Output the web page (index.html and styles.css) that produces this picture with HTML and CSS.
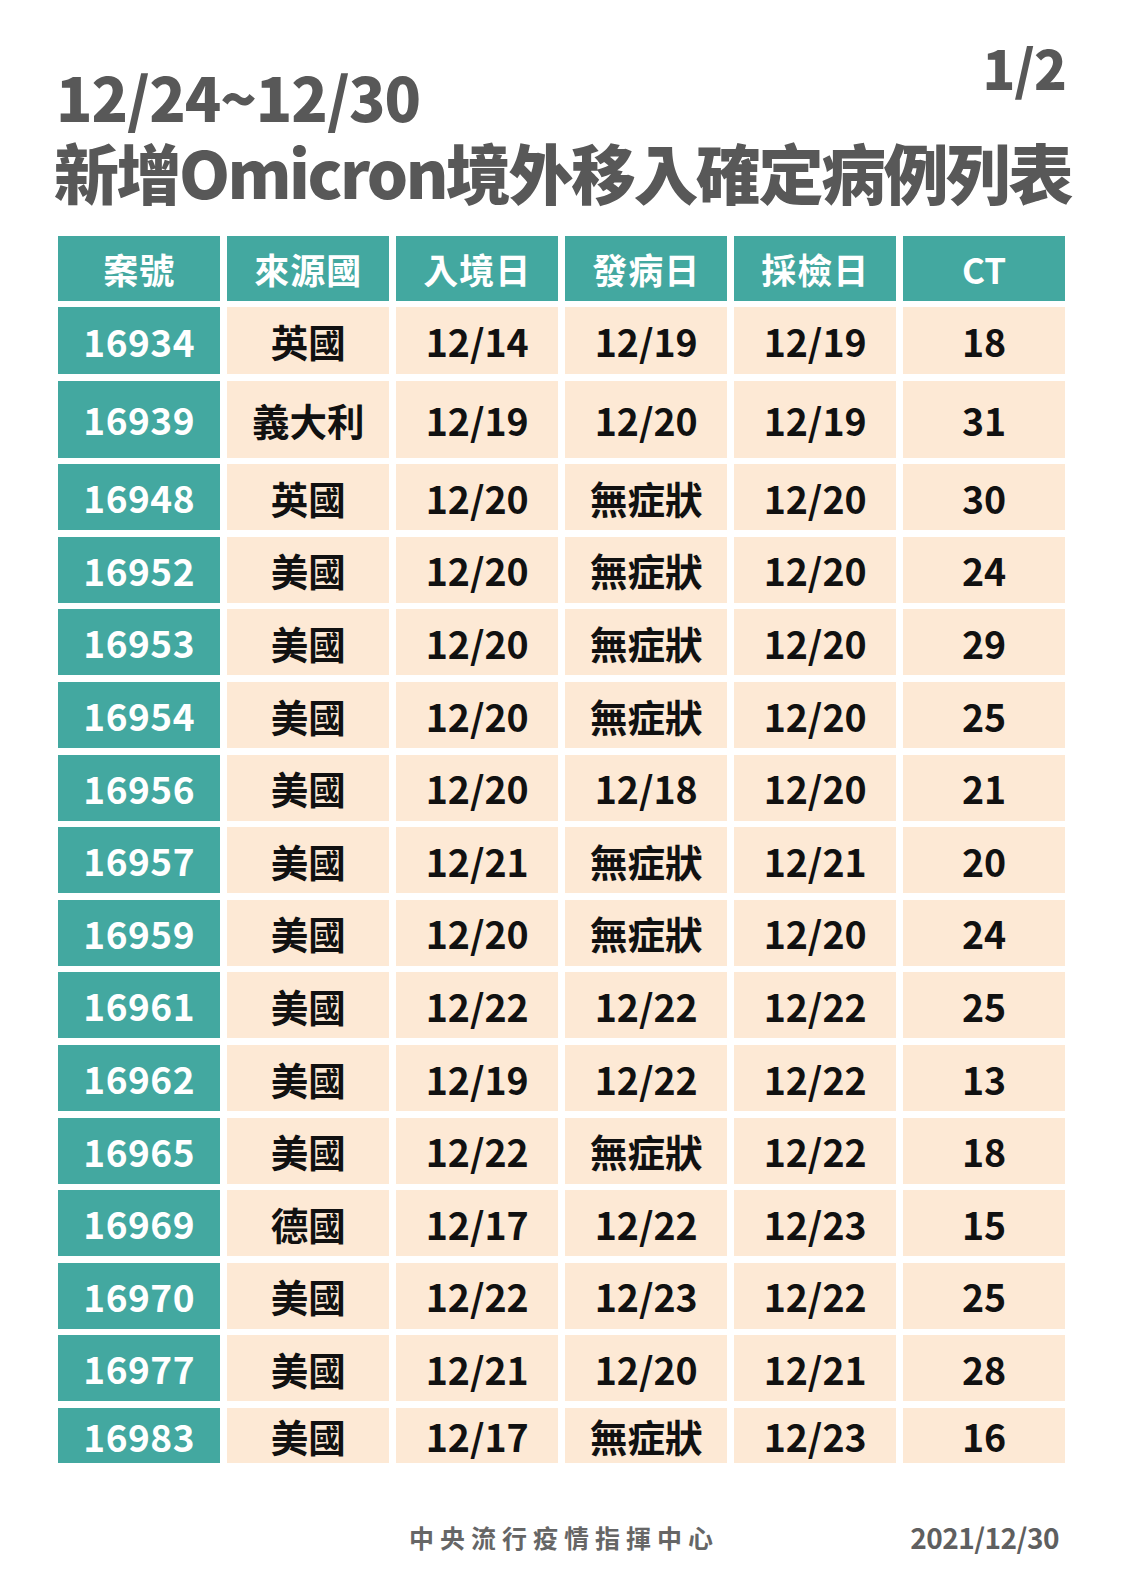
FILE: index.html
```html
<!DOCTYPE html>
<html lang="zh-Hant">
<head>
<meta charset="utf-8">
<title>Omicron 境外移入確定病例列表</title>
<link rel="stylesheet" href="styles.css">
</head>
<body>
<div class="page">
  <header class="head">
    <h1 class="title">
      <span class="title-date">12/24~12/30</span>
      <span class="title-main">新增Omicron境外移入確定病例列表</span>
    </h1>
    <div class="pageno">1/2</div>
  </header>

  <div class="table">
    <div class="th">案號</div><div class="th">來源國</div><div class="th">入境日</div><div class="th">發病日</div><div class="th">採檢日</div><div class="th th-latin">CT</div>

    <div class="id">16934</div><div class="td">英國</div><div class="td">12/14</div><div class="td">12/19</div><div class="td">12/19</div><div class="td">18</div>
    <div class="id">16939</div><div class="td">義大利</div><div class="td">12/19</div><div class="td">12/20</div><div class="td">12/19</div><div class="td">31</div>
    <div class="id">16948</div><div class="td">英國</div><div class="td">12/20</div><div class="td">無症狀</div><div class="td">12/20</div><div class="td">30</div>
    <div class="id">16952</div><div class="td">美國</div><div class="td">12/20</div><div class="td">無症狀</div><div class="td">12/20</div><div class="td">24</div>
    <div class="id">16953</div><div class="td">美國</div><div class="td">12/20</div><div class="td">無症狀</div><div class="td">12/20</div><div class="td">29</div>
    <div class="id">16954</div><div class="td">美國</div><div class="td">12/20</div><div class="td">無症狀</div><div class="td">12/20</div><div class="td">25</div>
    <div class="id">16956</div><div class="td">美國</div><div class="td">12/20</div><div class="td">12/18</div><div class="td">12/20</div><div class="td">21</div>
    <div class="id">16957</div><div class="td">美國</div><div class="td">12/21</div><div class="td">無症狀</div><div class="td">12/21</div><div class="td">20</div>
    <div class="id">16959</div><div class="td">美國</div><div class="td">12/20</div><div class="td">無症狀</div><div class="td">12/20</div><div class="td">24</div>
    <div class="id">16961</div><div class="td">美國</div><div class="td">12/22</div><div class="td">12/22</div><div class="td">12/22</div><div class="td">25</div>
    <div class="id">16962</div><div class="td">美國</div><div class="td">12/19</div><div class="td">12/22</div><div class="td">12/22</div><div class="td">13</div>
    <div class="id">16965</div><div class="td">美國</div><div class="td">12/22</div><div class="td">無症狀</div><div class="td">12/22</div><div class="td">18</div>
    <div class="id">16969</div><div class="td">德國</div><div class="td">12/17</div><div class="td">12/22</div><div class="td">12/23</div><div class="td">15</div>
    <div class="id">16970</div><div class="td">美國</div><div class="td">12/22</div><div class="td">12/23</div><div class="td">12/22</div><div class="td">25</div>
    <div class="id">16977</div><div class="td">美國</div><div class="td">12/21</div><div class="td">12/20</div><div class="td">12/21</div><div class="td">28</div>
    <div class="id">16983</div><div class="td">美國</div><div class="td">12/17</div><div class="td">無症狀</div><div class="td">12/23</div><div class="td">16</div>
  </div>

  <footer class="foot">
    <div class="foot-spacer"></div>
    <div class="foot-org">中央流行疫情指揮中心</div>
    <div class="foot-date">2021/12/30</div>
  </footer>
</div>
</body>
</html>
```

FILE: styles.css
```css
html, body {
  margin: 0;
  padding: 0;
  background: #ffffff;
}

body {
  font-family: "Noto Sans CJK TC", "Noto Sans", sans-serif;
  color: #111111;
}

.page {
  width: 1123px;
  height: 1587px;
  box-sizing: border-box;
  padding: 30px 0 0 56px;
}

.head {
  width: 1010px;
  display: grid;
  grid-template-columns: 1fr auto;
  grid-template-rows: auto auto;
}

.title {
  display: contents;
  color: #585858;
  font-weight: 900;
}

.title-date {
  grid-column: 1;
  grid-row: 1;
  color: #585858;
  font-weight: 900;
  font-size: 60px;
  line-height: 64px;
  letter-spacing: -1px;
  margin-top: 34px;
}

.title-main {
  grid-column: 1 / 3;
  grid-row: 2;
  color: #585858;
  font-weight: 900;
  white-space: nowrap;
  font-size: 65px;
  line-height: 72px;
  letter-spacing: -2.5px;
  margin-left: -2px;
  margin-top: 7px;
}

.pageno {
  grid-column: 2;
  grid-row: 1;
  align-self: start;
  font-size: 54px;
  line-height: 54px;
  font-weight: 900;
  color: #585858;
  margin-top: 10px;
  letter-spacing: -1px;
}

.table {
  margin: 28.5px 0 0 2px;
  display: grid;
  grid-template-columns: repeat(6, 162.4px);
  grid-template-rows: 65px 67px 77px repeat(13, 66px);
  gap: 6.6px;
}

.th, .id, .td {
  display: flex;
  align-items: center;
  justify-content: center;
}

.th {
  background: #43a8a0;
  color: #ffffff;
  font-size: 35px;
  font-weight: 600;
  letter-spacing: 1px;
}

.th-latin {
  letter-spacing: 0;
}

.id {
  background: #43a8a0;
  color: #ffffff;
  font-size: 37px;
  font-weight: 600;
  letter-spacing: 0.5px;
}

.td {
  background: #fde9d5;
  color: #111111;
  font-size: 37.5px;
  font-weight: 700;
}

.foot {
  width: 1010px;
  margin-top: 54px;
  display: grid;
  grid-template-columns: 1fr auto 1fr;
  align-items: center;
}

.foot-org {
  font-size: 25px;
  font-weight: 700;
  letter-spacing: 6px;
  margin-right: -6px;
  color: #666666;
}

.foot-date {
  justify-self: end;
  padding-right: 7px;
  font-size: 28px;
  font-weight: 700;
  color: #5f5f5f;
  letter-spacing: -0.5px;
}
```
